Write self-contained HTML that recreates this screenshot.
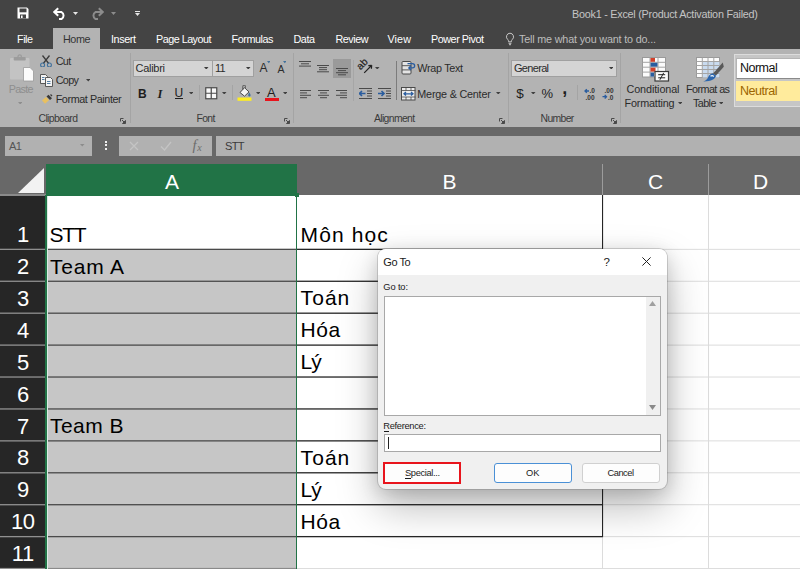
<!DOCTYPE html>
<html lang="vi"><head><meta charset="utf-8"><title>Go To - Excel</title>
<style>
html,body{margin:0;padding:0;}
body{width:800px;height:569px;overflow:hidden;background:#fff;font-family:"Liberation Sans",sans-serif;}
#root{position:relative;width:800px;height:569px;overflow:hidden;background:#fff;}
.b{position:absolute;box-sizing:border-box;}
.t{position:absolute;white-space:nowrap;line-height:1;}
</style></head><body><div id="root">
<div class="b" style="left:0px;top:0px;width:800px;height:49px;background:#444444;"></div>
<div class="b" style="left:53px;top:28px;width:47px;height:21px;background:#b3b3b3;"></div>
<div class="b" style="left:0px;top:49px;width:800px;height:78px;background:#b3b3b3;"></div>
<div class="b" style="left:0px;top:127px;width:800px;height:68px;background:#686868;"></div>
<span class="t" style="left:572.00px;top:8.86px;font-size:10.8px;color:#c4c4c4;letter-spacing:-0.242px;">Book1 - Excel (Product Activation Failed)</span>
<span class="t" style="left:17.00px;top:33.86px;font-size:10.8px;color:#fff;letter-spacing:-0.468px;">File</span>
<span class="t" style="left:63.00px;top:33.86px;font-size:10.8px;color:#333;letter-spacing:-0.436px;">Home</span>
<span class="t" style="left:111.00px;top:33.86px;font-size:10.8px;color:#fff;letter-spacing:-0.402px;">Insert</span>
<span class="t" style="left:156.00px;top:33.86px;font-size:10.8px;color:#fff;letter-spacing:-0.515px;">Page Layout</span>
<span class="t" style="left:231.50px;top:33.86px;font-size:10.8px;color:#fff;letter-spacing:-0.430px;">Formulas</span>
<span class="t" style="left:293.50px;top:33.86px;font-size:10.8px;color:#fff;letter-spacing:-0.438px;">Data</span>
<span class="t" style="left:335.50px;top:33.86px;font-size:10.8px;color:#fff;letter-spacing:-0.482px;">Review</span>
<span class="t" style="left:387.50px;top:33.86px;font-size:10.8px;color:#fff;letter-spacing:0.095px;">View</span>
<span class="t" style="left:431.00px;top:33.86px;font-size:10.8px;color:#fff;letter-spacing:-0.462px;">Power Pivot</span>
<span class="t" style="left:519.00px;top:33.86px;font-size:10.8px;color:#bdbdbd;letter-spacing:-0.182px;">Tell me what you want to do...</span>
<svg class="b" style="left:505px;top:32px;" width="10" height="14" viewBox="0 0 10 14"><path d="M5 1.2a3.6 3.6 0 0 0-2.2 6.4c.5.5.7 1 .7 1.6v.6h3v-.6c0-.6.2-1.1.7-1.6A3.6 3.6 0 0 0 5 1.200z" fill="none" stroke="#c8c8c8" stroke-width="1"/><path d="M3.6 11.3h2.800M4 12.700h2" stroke="#c8c8c8" stroke-width="1"/></svg>
<svg class="b" style="left:17px;top:7px;" width="12" height="12" viewBox="0 0 12 12"><path d="M0.500 0.500h9.500l1.500 1.500v9.500h-11z" fill="#fff"/><rect x="2.500" y="1.500" width="7" height="3.800" fill="#444"/><rect x="3" y="7.500" width="6" height="4" fill="#444"/><rect x="4" y="8.500" width="1.600" height="2.500" fill="#fff"/></svg>
<svg class="b" style="left:53px;top:7px;" width="14" height="13" viewBox="0 0 14 13"><g><path d="M5.200 1.200L1.300 5l3.900 3.800" fill="none" stroke="#fff" stroke-width="2"/><path d="M1.800 5h6.700a4 4 0 0 1 0 7h-2.500" fill="none" stroke="#fff" stroke-width="2"/></g></svg>
<svg class="b" style="left:89.5px;top:7px;" width="14" height="13" viewBox="0 0 14 13"><g transform="translate(14,0) scale(-1,1)"><path d="M5.200 1.200L1.300 5l3.900 3.800" fill="none" stroke="#8c8c8c" stroke-width="2"/><path d="M1.800 5h6.700a4 4 0 0 1 0 7h-2.500" fill="none" stroke="#8c8c8c" stroke-width="2"/></g></svg>
<svg class="b" style="left:73.1px;top:11.5px;" width="5" height="3" viewBox="0 0 5 3"><path d="M0 0h5l-2.5 3z" fill="#e6e6e6"/></svg>
<svg class="b" style="left:110.5px;top:11.5px;" width="5" height="3" viewBox="0 0 5 3"><path d="M0 0h5l-2.5 3z" fill="#8c8c8c"/></svg>
<div class="b" style="left:134.5px;top:10.5px;width:5.0px;height:1.0px;background:#e6e6e6;"></div>
<svg class="b" style="left:134.5px;top:12.5px;" width="5" height="3" viewBox="0 0 5 3"><path d="M0 0h5l-2.5 3z" fill="#e6e6e6"/></svg>
<svg class="b" style="left:9px;top:54px;" width="26" height="29" viewBox="0 0 26 29"><rect x="1" y="4" width="19.500" height="21.500" rx="1" fill="#c3c3c3"/>
<rect x="4.700" y="3" width="12" height="3.500" rx="0.800" fill="#9c9c9c"/><circle cx="10.700" cy="2.600" r="1.700" fill="none" stroke="#9c9c9c" stroke-width="1.300"/>
<path d="M14.500 13.500h6.500l3.500 3.500v10h-10z" fill="#fbfbfb" stroke="#9a9a9a" stroke-width="0.800"/></svg>
<span class="t" style="left:8.70px;top:84.36px;font-size:10.8px;color:#8e8e8e;letter-spacing:-0.670px;">Paste</span>
<svg class="b" style="left:17.75px;top:101.7px;" width="4.5" height="2.6" viewBox="0 0 4.5 2.6"><path d="M0 0h4.5l-2.25 2.6z" fill="#8e8e8e"/></svg>
<svg class="b" style="left:40px;top:54.5px;" width="12" height="12.5" viewBox="0 0 12 12.5"><path d="M2.500 0.500L8.700 8.500M9.500 0.500L3.300 8.500" stroke="#3c3c3c" stroke-width="1.300" fill="none"/>
<circle cx="2.600" cy="10" r="2" fill="none" stroke="#41719c" stroke-width="1.100"/><circle cx="9.400" cy="10" r="2" fill="none" stroke="#41719c" stroke-width="1.100"/></svg>
<span class="t" style="left:55.70px;top:56.16px;font-size:10.8px;color:#2b2b2b;letter-spacing:-0.670px;">Cut</span>
<svg class="b" style="left:40px;top:74px;" width="13" height="13" viewBox="0 0 13 13"><path d="M0.500 0.500h5l2 2v7h-7z" fill="#f4f4f4" stroke="#4a4a4a" stroke-width="0.900"/>
<path d="M5.500 3.500h5l2 2v7h-7z" fill="#f4f4f4" stroke="#4a4a4a" stroke-width="0.900"/>
<path d="M2 3.500h2.500M2 5.500h2.500M7 7.500h3.500M7 9.500h3.500" stroke="#41719c" stroke-width="0.900"/></svg>
<span class="t" style="left:55.70px;top:75.16px;font-size:10.8px;color:#2b2b2b;letter-spacing:-0.637px;">Copy</span>
<svg class="b" style="left:85.75px;top:79.10000000000001px;" width="4.5" height="2.6" viewBox="0 0 4.5 2.6"><path d="M0 0h4.5l-2.25 2.6z" fill="#404040"/></svg>
<svg class="b" style="left:40.5px;top:94px;" width="12" height="11" viewBox="0 0 12 11"><path d="M1 6.500l4-3.500 3 3.200-4 3.600z" fill="#e8c060"/>
<path d="M5.500 2.500l2-1.800 3.500 3.600-2 1.800z" fill="#3a3a3a"/><path d="M9.500 0.500l1.500 1.500" stroke="#3a3a3a" stroke-width="1.200"/></svg>
<span class="t" style="left:55.70px;top:94.26px;font-size:10.8px;color:#2b2b2b;letter-spacing:-0.417px;">Format Painter</span>
<span class="t" style="left:38.50px;top:114.20px;font-size:10.4px;color:#3a3a3a;letter-spacing:-0.627px;">Clipboard</span>
<svg class="b" style="left:120px;top:117.5px;" width="6" height="6" viewBox="0 0 6 6"><path d="M0.500 3.500v-3h3" fill="none" stroke="#4a4a4a" stroke-width="1"/><path d="M2 2l3 3M5.500 2.500v3h-3z" stroke="#4a4a4a" stroke-width="1" fill="#4a4a4a"/></svg>
<div class="b" style="left:130px;top:53px;width:1px;height:70px;background:#a4a4a4;"></div>
<div class="b" style="left:133px;top:60px;width:79.5px;height:17px;background:#d4d4d4;border:1px solid #a0a0a0;"></div>
<div class="b" style="left:212.5px;top:60px;width:41.5px;height:17px;background:#d4d4d4;border:1px solid #a0a0a0;border-left:none;"></div>
<span class="t" style="left:135.50px;top:62.99px;font-size:11.0px;color:#2b2b2b;letter-spacing:-0.279px;">Calibri</span>
<svg class="b" style="left:204.25px;top:66.7px;" width="4.5" height="2.6" viewBox="0 0 4.5 2.6"><path d="M0 0h4.5l-2.25 2.6z" fill="#3c3c3c"/></svg>
<span class="t" style="left:215.00px;top:62.99px;font-size:11.0px;color:#2b2b2b;letter-spacing:-0.682px;">11</span>
<svg class="b" style="left:246.05px;top:66.7px;" width="4.5" height="2.6" viewBox="0 0 4.5 2.6"><path d="M0 0h4.5l-2.25 2.6z" fill="#3c3c3c"/></svg>
<span class="t" style="left:259.50px;top:62.34px;font-size:12px;color:#2b2b2b;">A</span>
<svg class="b" style="left:266.7px;top:61.4px;" width="3.6" height="2.2" viewBox="0 0 3.6 2.2"><path d="M0 0h3.6l-1.8 2.2z" fill="#41719c"/></svg>
<span class="t" style="left:277.50px;top:63.61px;font-size:10.5px;color:#2b2b2b;">A</span>
<svg class="b" style="left:282.7px;top:61.4px;" width="3.6" height="2.2" viewBox="0 0 3.6 2.2"><path d="M0 0h3.600l-1.800 2.200z" fill="#41719c"/></svg>
<span class="t" style="left:138.00px;top:87.84px;font-size:12px;color:#1e1e1e;font-weight:bold;">B</span>
<span class="t" style="left:157.50px;top:87.53px;font-size:12.5px;color:#1e1e1e;font-family:'Liberation Serif',serif;font-weight:bold;font-style:italic;">I</span>
<span class="t" style="left:174.50px;top:86.84px;font-size:12px;color:#1e1e1e;">U</span>
<div class="b" style="left:174.5px;top:98px;width:8.0px;height:1px;background:#1e1e1e;"></div>
<svg class="b" style="left:188.75px;top:91.7px;" width="4.5" height="2.6" viewBox="0 0 4.5 2.6"><path d="M0 0h4.5l-2.25 2.6z" fill="#404040"/></svg>
<div class="b" style="left:199px;top:85px;width:1px;height:15px;background:#a4a4a4;"></div>
<svg class="b" style="left:205px;top:87px;" width="12.5" height="12.5" viewBox="0 0 12.5 12.5"><rect x="0.750" y="0.750" width="11" height="11" fill="#f8f8f8" stroke="#4a4a4a" stroke-width="1.200"/><path d="M6.250 0.750v11M0.750 6.250h11" stroke="#4a4a4a" stroke-width="1.200"/></svg>
<svg class="b" style="left:222.25px;top:91.7px;" width="4.5" height="2.6" viewBox="0 0 4.5 2.6"><path d="M0 0h4.5l-2.25 2.6z" fill="#404040"/></svg>
<div class="b" style="left:232px;top:85px;width:1px;height:15px;background:#a4a4a4;"></div>
<svg class="b" style="left:237px;top:85px;" width="15" height="16" viewBox="0 0 15 16"><path d="M3 7.500l4.500-4.800 4.500 4.200-4.500 4.300z" fill="#f5f5f5" stroke="#4a4a4a" stroke-width="1"/>
<path d="M5.800 4.500v-3.200a1.300 1.300 0 0 1 2.600 0v1.500" fill="none" stroke="#4a4a4a" stroke-width="0.900"/>
<path d="M12.300 7.500c.8 1.200 1.300 2 1.300 2.700a1.200 1.200 0 0 1-2.400 0c0-.7.400-1.500 1.100-2.700z" fill="#41719c"/>
<rect x="0.500" y="12.500" width="14" height="3.300" fill="#ffee22"/></svg>
<svg class="b" style="left:255.55px;top:91.7px;" width="4.5" height="2.6" viewBox="0 0 4.5 2.6"><path d="M0 0h4.5l-2.25 2.6z" fill="#404040"/></svg>
<span class="t" style="left:267.00px;top:86.00px;font-size:13px;color:#1e1e1e;">A</span>
<div class="b" style="left:265px;top:97.5px;width:14px;height:3.299999999999997px;background:#e8141c;"></div>
<svg class="b" style="left:282.75px;top:91.7px;" width="4.5" height="2.6" viewBox="0 0 4.5 2.6"><path d="M0 0h4.5l-2.25 2.6z" fill="#404040"/></svg>
<span class="t" style="left:196.50px;top:114.20px;font-size:10.4px;color:#3a3a3a;letter-spacing:-0.645px;">Font</span>
<svg class="b" style="left:283.5px;top:117.5px;" width="6" height="6" viewBox="0 0 6 6"><path d="M0.500 3.500v-3h3" fill="none" stroke="#4a4a4a" stroke-width="1"/><path d="M2 2l3 3M5.500 2.500v3h-3z" stroke="#4a4a4a" stroke-width="1" fill="#4a4a4a"/></svg>
<div class="b" style="left:292.5px;top:53px;width:1.0px;height:70px;background:#a4a4a4;"></div>
<svg class="b" style="left:299px;top:61px;" width="12" height="6.8999999999999995" viewBox="0 0 12 6.8999999999999995"><rect x="0.0" y="0.0" width="12" height="1" fill="#4a4a4a"/><rect x="2.0" y="2.3" width="8" height="1" fill="#4a4a4a"/><rect x="0.0" y="4.6" width="12" height="1" fill="#4a4a4a"/></svg>
<svg class="b" style="left:317px;top:64.5px;" width="12" height="8.4" viewBox="0 0 12 8.4"><rect x="0.0" y="0.0" width="12" height="1" fill="#4a4a4a"/><rect x="2.0" y="2.1" width="8" height="1" fill="#4a4a4a"/><rect x="2.0" y="4.2" width="8" height="1" fill="#4a4a4a"/><rect x="0.0" y="6.300000000000001" width="12" height="1" fill="#4a4a4a"/></svg>
<div class="b" style="left:332.5px;top:59px;width:18.5px;height:18.5px;background:#9a9a9a;"></div>
<svg class="b" style="left:336px;top:67.5px;" width="12" height="8.4" viewBox="0 0 12 8.4"><rect x="0.0" y="0.0" width="12" height="1" fill="#4a4a4a"/><rect x="2.0" y="2.1" width="8" height="1" fill="#4a4a4a"/><rect x="0.0" y="4.2" width="12" height="1" fill="#4a4a4a"/><rect x="2.0" y="6.300000000000001" width="8" height="1" fill="#4a4a4a"/></svg>
<svg class="b" style="left:357px;top:59px;" width="16" height="16" viewBox="0 0 16 16"><text x="0" y="0" font-size="10" font-family="Liberation Sans,sans-serif" fill="#222" stroke="#222" stroke-width="0.200" transform="translate(3.500,11.300) rotate(-45)">ab</text>
<path d="M7.200 13.800l7.300-7.300M14.700 6.300l-3.400.3M14.700 6.300l-.3 3.400" stroke="#222" stroke-width="1.200" fill="none"/></svg>
<svg class="b" style="left:375.25px;top:66.7px;" width="4.5" height="2.6" viewBox="0 0 4.5 2.6"><path d="M0 0h4.5l-2.25 2.6z" fill="#404040"/></svg>
<div class="b" style="left:353px;top:60px;width:1px;height:41px;background:#a6a6a6;"></div>
<svg class="b" style="left:300px;top:89.5px;" width="11" height="9.6" viewBox="0 0 11 9.6"><rect x="0" y="0.0" width="11" height="1" fill="#4a4a4a"/><rect x="0" y="2.4" width="7" height="1" fill="#4a4a4a"/><rect x="0" y="4.8" width="11" height="1" fill="#4a4a4a"/><rect x="0" y="7.199999999999999" width="7" height="1" fill="#4a4a4a"/></svg>
<svg class="b" style="left:318px;top:89.5px;" width="11" height="9.6" viewBox="0 0 11 9.6"><rect x="0.0" y="0.0" width="11" height="1" fill="#4a4a4a"/><rect x="2.0" y="2.4" width="7" height="1" fill="#4a4a4a"/><rect x="0.0" y="4.8" width="11" height="1" fill="#4a4a4a"/><rect x="2.0" y="7.199999999999999" width="7" height="1" fill="#4a4a4a"/></svg>
<svg class="b" style="left:336px;top:89.5px;" width="11" height="9.6" viewBox="0 0 11 9.6"><rect x="0" y="0.0" width="11" height="1" fill="#4a4a4a"/><rect x="4" y="2.4" width="7" height="1" fill="#4a4a4a"/><rect x="0" y="4.8" width="11" height="1" fill="#4a4a4a"/><rect x="4" y="7.199999999999999" width="7" height="1" fill="#4a4a4a"/></svg>
<svg class="b" style="left:359px;top:88px;" width="13" height="11.5" viewBox="0 0 13 11.5"><path d="M0 0.500h13M8 3h5M8 5.500h5M8 8h5M0 10.500h13" stroke="#4a4a4a" stroke-width="1"/><path d="M6.500 5.500h-6M3 3l-2.500 2.500 2.500 2.500" stroke="#2a5d9f" stroke-width="1.600" fill="none"/></svg>
<svg class="b" style="left:377.5px;top:88px;" width="13" height="11.5" viewBox="0 0 13 11.5"><path d="M0 0.500h13M8 3h5M8 5.500h5M8 8h5M0 10.500h13" stroke="#4a4a4a" stroke-width="1"/><path d="M0 5.500h6M3.500 3l2.500 2.500-2.500 2.500" stroke="#2a5d9f" stroke-width="1.600" fill="none"/></svg>
<div class="b" style="left:395.5px;top:61px;width:1.0px;height:39px;background:#7c7c7c;"></div>
<svg class="b" style="left:400.5px;top:61px;" width="15" height="14" viewBox="0 0 15 14"><rect x="1" y="0.500" width="9" height="12.500" rx="1" fill="#e4e4e4" stroke="#4a4a4a" stroke-width="1"/>
<path d="M1 4.700h9M1 8.900h9" stroke="#4a4a4a" stroke-width="0.900"/>
<path d="M6.500 2.600h5a2.100 2.100 0 0 1 0 4.300h-3.500M10 4.800l-2.200 2.100 2.200 2.100" stroke="#2a5d9f" stroke-width="1.300" fill="none"/></svg>
<span class="t" style="left:417.30px;top:62.86px;font-size:10.8px;color:#2b2b2b;letter-spacing:-0.315px;">Wrap Text</span>
<svg class="b" style="left:400.5px;top:87px;" width="15" height="13.5" viewBox="0 0 15 13.5"><rect x="0.500" y="0.500" width="13.500" height="12.500" fill="#ececec" stroke="#4a4a4a" stroke-width="1"/>
<path d="M0.500 3.500h14M0.500 10h14M5 0.500v3M10 0.500v3M5 10v3M10 10v3" stroke="#4a4a4a" stroke-width="0.800"/>
<path d="M3 6.800h9M5 5l-2 1.800 2 1.800M10 5l2 1.800-2 1.800" stroke="#2a5d9f" stroke-width="1.300" fill="none"/></svg>
<span class="t" style="left:417.30px;top:88.86px;font-size:10.8px;color:#2b2b2b;letter-spacing:-0.210px;">Merge &amp; Center</span>
<svg class="b" style="left:496.45px;top:91.7px;" width="4.5" height="2.6" viewBox="0 0 4.5 2.6"><path d="M0 0h4.5l-2.25 2.6z" fill="#404040"/></svg>
<span class="t" style="left:374.00px;top:114.20px;font-size:10.4px;color:#3a3a3a;letter-spacing:-0.645px;">Alignment</span>
<svg class="b" style="left:499px;top:117.5px;" width="6" height="6" viewBox="0 0 6 6"><path d="M0.500 3.500v-3h3" fill="none" stroke="#4a4a4a" stroke-width="1"/><path d="M2 2l3 3M5.500 2.500v3h-3z" stroke="#4a4a4a" stroke-width="1" fill="#4a4a4a"/></svg>
<div class="b" style="left:507.5px;top:53px;width:1.0px;height:70px;background:#a4a4a4;"></div>
<div class="b" style="left:511px;top:60px;width:105.5px;height:17px;background:#d4d4d4;border:1px solid #a0a0a0;"></div>
<span class="t" style="left:514.00px;top:62.99px;font-size:11.0px;color:#2b2b2b;letter-spacing:-0.682px;">General</span>
<svg class="b" style="left:608.75px;top:66.7px;" width="4.5" height="2.6" viewBox="0 0 4.5 2.6"><path d="M0 0h4.5l-2.25 2.6z" fill="#3c3c3c"/></svg>
<span class="t" style="left:516.30px;top:86.87px;font-size:13.5px;color:#1e1e1e;">$</span>
<svg class="b" style="left:531.05px;top:91.7px;" width="4.5" height="2.6" viewBox="0 0 4.5 2.6"><path d="M0 0h4.5l-2.25 2.6z" fill="#404040"/></svg>
<span class="t" style="left:541.50px;top:87.00px;font-size:13px;color:#1e1e1e;">%</span>
<span class="t" style="left:562.30px;top:78.56px;font-size:18px;color:#1e1e1e;font-weight:bold;">,</span>
<div class="b" style="left:577px;top:85px;width:1px;height:15px;background:#a4a4a4;"></div>
<svg class="b" style="left:584px;top:87.5px;" width="13" height="12" viewBox="0 0 13 12"><path d="M5 3h-4M2.800 1.200L1 3l1.800 1.800" stroke="#2a5d9f" stroke-width="1.300" fill="none"/><text x="5.500" y="5.200" font-size="6.500" font-weight="bold" font-family="Liberation Sans,sans-serif" fill="#333">.0</text><text x="1.500" y="11.500" font-size="6.500" font-weight="bold" font-family="Liberation Sans,sans-serif" fill="#333">.00</text></svg>
<svg class="b" style="left:601.5px;top:87.5px;" width="13" height="12" viewBox="0 0 13 12"><text x="2.500" y="5.200" font-size="6.500" font-weight="bold" font-family="Liberation Sans,sans-serif" fill="#333">.00</text><path d="M0.500 8.700h4M2.700 6.900L4.500 8.700l-1.800 1.800" stroke="#2a5d9f" stroke-width="1.300" fill="none"/><text x="6" y="11.500" font-size="6.500" font-weight="bold" font-family="Liberation Sans,sans-serif" fill="#333">.0</text></svg>
<span class="t" style="left:540.60px;top:114.20px;font-size:10.4px;color:#3a3a3a;letter-spacing:-0.645px;">Number</span>
<svg class="b" style="left:610.5px;top:117.5px;" width="6" height="6" viewBox="0 0 6 6"><path d="M0.500 3.500v-3h3" fill="none" stroke="#4a4a4a" stroke-width="1"/><path d="M2 2l3 3M5.500 2.500v3h-3z" stroke="#4a4a4a" stroke-width="1" fill="#4a4a4a"/></svg>
<div class="b" style="left:620px;top:53px;width:1px;height:70px;background:#a4a4a4;"></div>
<svg class="b" style="left:641.5px;top:57px;" width="28" height="25" viewBox="0 0 28 25"><rect x="0.500" y="0.500" width="23" height="19.500" fill="#fbfbfb" stroke="#9a9a9a" stroke-width="1"/>
<path d="M0.500 5.300h23M0.500 10.200h23M0.500 15.100h23M8 0.500v19.500M16 0.500v19.500" stroke="#a4a4a4" stroke-width="1"/>
<rect x="8.500" y="1" width="4.500" height="3.800" fill="#d2402a"/><rect x="8.500" y="5.800" width="7" height="3.900" fill="#2a5d9f"/>
<rect x="8.500" y="10.700" width="5" height="3.900" fill="#d2402a"/><rect x="8.500" y="15.600" width="3.500" height="4" fill="#2a5d9f"/>
<rect x="13" y="14.500" width="13.500" height="9.500" fill="#fafafa" stroke="#3a3a3a" stroke-width="1.200"/>
<path d="M16.200 17.700h7M16.200 20.800h7M21.700 15.800l-3.800 7" stroke="#222" stroke-width="1"/></svg>
<span class="t" style="left:626.50px;top:84.06px;font-size:10.8px;color:#2b2b2b;letter-spacing:-0.104px;">Conditional</span>
<span class="t" style="left:624.60px;top:98.06px;font-size:10.8px;color:#2b2b2b;letter-spacing:-0.191px;">Formatting</span>
<svg class="b" style="left:677.75px;top:101.7px;" width="4.5" height="2.6" viewBox="0 0 4.5 2.6"><path d="M0 0h4.5l-2.25 2.6z" fill="#404040"/></svg>
<svg class="b" style="left:696px;top:56.5px;" width="28" height="26" viewBox="0 0 28 26"><rect x="0.500" y="0.500" width="23" height="20" fill="#fbfbfb" stroke="#9a9a9a" stroke-width="1"/>
<rect x="6.500" y="5" width="17" height="15.500" fill="#c9dbef"/>
<path d="M0.500 4.500h23M0.500 8.500h23M0.500 12.500h23M0.500 16.500h23M6.300 0.500v20M12 0.500v20M17.800 0.500v20" stroke="#a4a4a4" stroke-width="1"/>
<path d="M26.800 5.500l1 4.200-8 9-2.800-2.200z" fill="#595959"/>
<path d="M16.800 16.200l3.200 2.600c-.8 3.300-4.500 5.800-12.700 5.700 2.800-1 3.800-2.300 4.800-4.300 1-2.200 2.600-3.600 4.700-4z" fill="#2a65ad"/>
<path d="M14.500 19.300c1-.8 2.300-.8 3.300.2" stroke="#f4f8fc" stroke-width="1.100" fill="none"/></svg>
<span class="t" style="left:686.00px;top:84.06px;font-size:10.8px;color:#2b2b2b;letter-spacing:-0.576px;">Format as</span>
<span class="t" style="left:693.00px;top:98.06px;font-size:10.8px;color:#2b2b2b;letter-spacing:-0.605px;">Table</span>
<svg class="b" style="left:718.75px;top:101.7px;" width="4.5" height="2.6" viewBox="0 0 4.5 2.6"><path d="M0 0h4.5l-2.25 2.6z" fill="#404040"/></svg>
<div class="b" style="left:733.5px;top:53.5px;width:67.5px;height:53.0px;background:#c6c6c6;border:1px solid #dcdcdc;"></div>
<div class="b" style="left:735.5px;top:57.5px;width:65.5px;height:21.0px;background:#fff;border:1px solid #b4b4b4;border-bottom-color:#8a8a8a;border-right:none;"></div>
<span class="t" style="left:740.00px;top:61.82px;font-size:12.5px;color:#111;letter-spacing:-0.517px;">Normal</span>
<div class="b" style="left:735.5px;top:80.5px;width:65.5px;height:20.0px;background:#ffeb9c;"></div>
<span class="t" style="left:740.00px;top:84.92px;font-size:12.5px;color:#9c6500;letter-spacing:-0.466px;">Neutral</span>
<div class="b" style="left:4.5px;top:135.5px;width:87.0px;height:20.0px;background:#b1b1b1;"></div>
<span class="t" style="left:9.00px;top:140.90px;font-size:11.100000000000001px;color:#555;letter-spacing:-0.688px;">A1</span>
<svg class="b" style="left:80.25px;top:144.2px;" width="4.5" height="2.6" viewBox="0 0 4.5 2.6"><path d="M0 0h4.5l-2.25 2.6z" fill="#8c8c8c"/></svg>
<div class="b" style="left:104.5px;top:140.5px;width:2.0px;height:2.0px;background:#f0f0f0;"></div>
<div class="b" style="left:104.5px;top:144px;width:2.0px;height:2px;background:#f0f0f0;"></div>
<div class="b" style="left:104.5px;top:147.5px;width:2.0px;height:2.0px;background:#f0f0f0;"></div>
<div class="b" style="left:118.5px;top:135.5px;width:93.5px;height:20.0px;background:#b1b1b1;"></div>
<svg class="b" style="left:128.5px;top:140.5px;" width="10" height="10" viewBox="0 0 10 10"><path d="M1 1l8 8M9 1l-8 8" stroke="#c4c4c4" stroke-width="1.200"/></svg>
<svg class="b" style="left:160px;top:140.5px;" width="12" height="10" viewBox="0 0 12 10"><path d="M1 5.500l3.500 3.500 6.500-8" stroke="#c4c4c4" stroke-width="1.300" fill="none"/></svg>
<span class="t" style="left:192.50px;top:138.36px;font-size:14.5px;color:#6c6c6c;font-family:'Liberation Serif',serif;font-style:italic;">f</span>
<span class="t" style="left:197.30px;top:142.62px;font-size:10px;color:#6c6c6c;font-family:'Liberation Serif',serif;font-style:italic;">x</span>
<div class="b" style="left:215.5px;top:135.5px;width:585.5px;height:20.0px;background:#b1b1b1;"></div>
<span class="t" style="left:225.00px;top:140.90px;font-size:11.100000000000001px;color:#3a3a3a;letter-spacing:-0.688px;">STT</span>
<div class="b" style="left:46px;top:163.5px;width:251px;height:31.0px;background:#217346;"></div>
<svg class="b" style="left:18px;top:168px;" width="26" height="25" viewBox="0 0 26 25"><path d="M26 0v25h-26z" fill="#f2f2f2"/></svg>
<span class="t" style="left:164.90px;top:170.92px;font-size:21px;color:#fff;">A</span>
<span class="t" style="left:442.50px;top:170.92px;font-size:21px;color:#fff;">B</span>
<span class="t" style="left:647.92px;top:170.92px;font-size:21px;color:#fff;">C</span>
<span class="t" style="left:752.92px;top:170.92px;font-size:21px;color:#fff;">D</span>
<div class="b" style="left:602px;top:164px;width:1px;height:31px;background:#9c9c9c;"></div>
<div class="b" style="left:708px;top:164px;width:1px;height:31px;background:#9c9c9c;"></div>
<div class="b" style="left:0px;top:195px;width:46px;height:374px;background:#262626;"></div>
<div class="b" style="left:46px;top:195px;width:251px;height:374px;background:#c6c6c6;"></div>
<div class="b" style="left:47px;top:196px;width:249px;height:53px;background:#fff;"></div>
<div class="b" style="left:0px;top:194px;width:46px;height:2px;background:#8a8a8a;"></div>
<svg class="b" style="left:0px;top:0px;" width="800" height="569" viewBox="0 0 800 569"><rect x="603" y="248.85" width="197" height="1" fill="#dcdcdc"/><rect x="0" y="248.70" width="46" height="1.3" fill="#909090"/><rect x="603" y="280.77" width="197" height="1" fill="#dcdcdc"/><rect x="0" y="280.62" width="46" height="1.3" fill="#909090"/><rect x="603" y="312.69" width="197" height="1" fill="#dcdcdc"/><rect x="0" y="312.54" width="46" height="1.3" fill="#909090"/><rect x="603" y="344.61" width="197" height="1" fill="#dcdcdc"/><rect x="0" y="344.46" width="46" height="1.3" fill="#909090"/><rect x="603" y="376.53" width="197" height="1" fill="#dcdcdc"/><rect x="0" y="376.38" width="46" height="1.3" fill="#909090"/><rect x="603" y="408.45" width="197" height="1" fill="#dcdcdc"/><rect x="0" y="408.30" width="46" height="1.3" fill="#909090"/><rect x="603" y="440.37" width="197" height="1" fill="#dcdcdc"/><rect x="0" y="440.22" width="46" height="1.3" fill="#909090"/><rect x="603" y="472.29" width="197" height="1" fill="#dcdcdc"/><rect x="0" y="472.14" width="46" height="1.3" fill="#909090"/><rect x="603" y="504.21" width="197" height="1" fill="#dcdcdc"/><rect x="0" y="504.06" width="46" height="1.3" fill="#909090"/><rect x="603" y="536.13" width="197" height="1" fill="#dcdcdc"/><rect x="0" y="535.98" width="46" height="1.3" fill="#909090"/><rect x="603" y="568.05" width="197" height="1" fill="#dcdcdc"/><rect x="0" y="567.90" width="46" height="1.3" fill="#909090"/><rect x="47" y="248.70" width="250" height="1.3" fill="#4a4a4a"/><rect x="297" y="248.70" width="306" height="1.3" fill="#262626"/><rect x="47" y="280.62" width="250" height="1.3" fill="#4a4a4a"/><rect x="297" y="280.62" width="306" height="1.3" fill="#262626"/><rect x="47" y="312.54" width="250" height="1.3" fill="#4a4a4a"/><rect x="297" y="312.54" width="306" height="1.3" fill="#262626"/><rect x="47" y="344.46" width="250" height="1.3" fill="#4a4a4a"/><rect x="297" y="344.46" width="306" height="1.3" fill="#262626"/><rect x="47" y="376.38" width="250" height="1.3" fill="#4a4a4a"/><rect x="297" y="376.38" width="306" height="1.3" fill="#262626"/><rect x="47" y="408.30" width="250" height="1.3" fill="#4a4a4a"/><rect x="297" y="408.30" width="306" height="1.3" fill="#262626"/><rect x="47" y="440.22" width="250" height="1.3" fill="#4a4a4a"/><rect x="297" y="440.22" width="306" height="1.3" fill="#262626"/><rect x="47" y="472.14" width="250" height="1.3" fill="#4a4a4a"/><rect x="297" y="472.14" width="306" height="1.3" fill="#262626"/><rect x="47" y="504.06" width="250" height="1.3" fill="#4a4a4a"/><rect x="297" y="504.06" width="306" height="1.3" fill="#262626"/><rect x="47" y="535.98" width="250" height="1.3" fill="#4a4a4a"/><rect x="297" y="535.98" width="306" height="1.3" fill="#262626"/><rect x="47" y="567.90" width="250" height="1.3" fill="#8a8a8a"/><rect x="297" y="568.05" width="306" height="1" fill="#dcdcdc"/><rect x="708" y="195" width="1" height="374" fill="#dcdcdc"/><rect x="602" y="536.63" width="1" height="40" fill="#dcdcdc"/><rect x="602" y="195" width="1.100" height="342.23" fill="#262626"/></svg>
<div class="b" style="left:45px;top:195px;width:1.5px;height:374px;background:#217346;"></div>
<div class="b" style="left:46.5px;top:195px;width:1.5px;height:374px;background:#dcebe3;"></div>
<div class="b" style="left:296px;top:195px;width:1px;height:374px;background:#217346;"></div>
<div class="b" style="left:46px;top:194.5px;width:251px;height:1.5px;background:#217346;"></div>
<div class="b" style="left:295px;top:193px;width:4px;height:4px;background:#217346;"></div>
<span class="t" style="left:16.88px;top:224.00px;font-size:22px;color:#fff;">1</span>
<span class="t" style="left:16.88px;top:256.00px;font-size:22px;color:#fff;">2</span>
<span class="t" style="left:16.88px;top:288.00px;font-size:22px;color:#fff;">3</span>
<span class="t" style="left:16.88px;top:320.00px;font-size:22px;color:#fff;">4</span>
<span class="t" style="left:16.88px;top:352.00px;font-size:22px;color:#fff;">5</span>
<span class="t" style="left:16.88px;top:384.00px;font-size:22px;color:#fff;">6</span>
<span class="t" style="left:16.88px;top:416.00px;font-size:22px;color:#fff;">7</span>
<span class="t" style="left:16.88px;top:447.00px;font-size:22px;color:#fff;">8</span>
<span class="t" style="left:16.88px;top:479.00px;font-size:22px;color:#fff;">9</span>
<span class="t" style="left:10.91px;top:511.00px;font-size:22px;color:#fff;letter-spacing:-0.300px;">10</span>
<span class="t" style="left:11.73px;top:543.00px;font-size:22px;color:#fff;letter-spacing:-0.300px;">11</span>
<span class="t" style="left:49.60px;top:224.00px;font-size:21px;color:#000;letter-spacing:-1.302px;">STT</span>
<span class="t" style="left:50.10px;top:256.00px;font-size:21px;color:#000;letter-spacing:0.773px;">Team A</span>
<span class="t" style="left:50.10px;top:415.00px;font-size:21px;color:#000;letter-spacing:0.421px;">Team B</span>
<span class="t" style="left:300.60px;top:224.00px;font-size:21px;color:#000;letter-spacing:1.109px;">Môn học</span>
<span class="t" style="left:300.60px;top:287.00px;font-size:21px;color:#000;letter-spacing:1.054px;">Toán</span>
<span class="t" style="left:300.60px;top:319.00px;font-size:21px;color:#000;letter-spacing:0.588px;">Hóa</span>
<span class="t" style="left:300.60px;top:351.00px;font-size:21px;color:#000;letter-spacing:-0.979px;">Lý</span>
<span class="t" style="left:300.60px;top:447.00px;font-size:21px;color:#000;letter-spacing:1.054px;">Toán</span>
<span class="t" style="left:300.60px;top:479.00px;font-size:21px;color:#000;letter-spacing:-0.979px;">Lý</span>
<span class="t" style="left:300.60px;top:511.00px;font-size:21px;color:#000;letter-spacing:0.588px;">Hóa</span>
<div class="b" style="left:377.500px;top:248.500px;width:289.500px;height:240px;border-radius:8px;background:#f0f0f0;box-shadow:0 0 0 1px rgba(90,90,90,0.24),0 18px 40px rgba(0,0,0,0.27),0 4px 18px rgba(0,0,0,0.15);overflow:hidden;"><div style="height:26px;background:#fff;"></div></div>
<span class="t" style="left:383.30px;top:257.29px;font-size:11px;color:#1a1a1a;letter-spacing:-0.462px;">Go To</span>
<span class="t" style="left:603.50px;top:256.87px;font-size:11.5px;color:#1a1a1a;">?</span>
<svg class="b" style="left:641.5px;top:257.2px;" width="9" height="9" viewBox="0 0 9 9"><path d="M0.400 0.400l8.200 8.200M8.600 0.400l-8.200 8.200" stroke="#222" stroke-width="1"/></svg>
<span class="t" style="left:383.30px;top:283.13px;font-size:9.3px;color:#1a1a1a;letter-spacing:-0.126px;">Go to:</span>
<div class="b" style="left:383.5px;top:295.5px;width:277.0px;height:120.5px;background:#fff;border:1px solid #a8a8a8;"></div>
<div class="b" style="left:645.5px;top:296.5px;width:14.0px;height:118.5px;background:#f0f0f0;"></div>
<svg class="b" style="left:649px;top:301px;" width="7" height="5" viewBox="0 0 7 5"><path d="M0 5h7l-3.500-5z" fill="#a0a0a0"/></svg>
<svg class="b" style="left:649px;top:405px;" width="7" height="5" viewBox="0 0 7 5"><path d="M0 0h7l-3.500 5z" fill="#8a8a8a"/></svg>
<span class="t" style="left:383.30px;top:422.13px;font-size:9.3px;color:#1a1a1a;letter-spacing:-0.310px;">Reference:</span>
<div class="b" style="left:383.8px;top:431px;width:5.699999999999989px;height:0.8000000000000114px;background:#1a1a1a;"></div>
<div class="b" style="left:383.5px;top:433.5px;width:277.0px;height:18.0px;background:#fff;border:1px solid #a8a8a8;"></div>
<div class="b" style="left:387.5px;top:436.5px;width:1.0px;height:12.0px;background:#222;"></div>
<div class="b" style="left:383px;top:462px;width:77.5px;height:21.5px;background:#fdfdfd;border:2px solid #e8141c;"></div>
<span class="t" style="left:405.00px;top:468.73px;font-size:9.3px;color:#1a1a1a;letter-spacing:-0.362px;">Special...</span>
<div class="b" style="left:405px;top:477.8px;width:5.5px;height:0.8000000000000114px;background:#1a1a1a;"></div>
<div class="b" style="left:494px;top:462.5px;width:77.5px;height:20.0px;background:#fdfdfd;border:1px solid #4a90d6;border-radius:3px;"></div>
<span class="t" style="left:526.08px;top:468.73px;font-size:9.3px;color:#1a1a1a;">OK</span>
<div class="b" style="left:582px;top:462.5px;width:77.5px;height:20.0px;background:#fdfdfd;border:1px solid #d0d0d0;border-radius:3px;"></div>
<span class="t" style="left:607.60px;top:468.73px;font-size:9.3px;color:#1a1a1a;letter-spacing:-0.510px;">Cancel</span>
</div></body></html>
